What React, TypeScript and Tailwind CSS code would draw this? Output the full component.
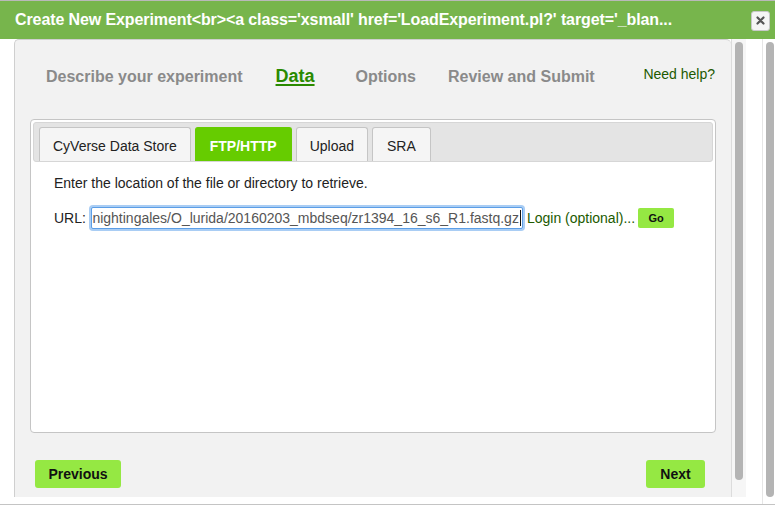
import React from "react";

export default function App() {
  const font = { fontFamily: '"Liberation Sans", Arial, sans-serif' };
  return (
    <div className="w-[775px] h-[506px] overflow-hidden bg-white flex flex-col" style={font}>
      {/* Header */}
      <div className="h-[39px] shrink-0 bg-[#77b54c] border-t border-[#b9b9b9] flex items-center pl-[15px] pr-[5px]">
        <div className="text-white font-bold text-[16px] leading-none whitespace-nowrap tracking-[-0.1px]">
          Create New Experiment&lt;br&gt;&lt;a class='xsmall' href='LoadExperiment.pl?' target='_blan...
        </div>
        <div className="ml-auto w-[19px] h-[20px] mt-[1px] bg-[#f5f5f5] border border-[#c8c8c8] rounded-[3px] flex items-center justify-center">
          <svg width="9" height="9" viewBox="0 0 9 9">
            <path d="M1.5 1.5 L7.5 7.5 M7.5 1.5 L1.5 7.5" stroke="#555" strokeWidth="2.2" strokeLinecap="round" />
          </svg>
        </div>
      </div>

      {/* Body */}
      <div className="flex flex-1 min-h-0">
        <div className="w-[14px] shrink-0" />
        {/* Panel */}
        <div className="w-[717px] h-[458px] shrink-0 bg-[#f2f2f2] border-l border-t border-[#cfcfcf] rounded-tl-[5px] rounded-tr-[5px] flex flex-col">
          {/* Steps */}
          <div className="h-[79px] flex items-center pl-[31px] pr-[16px] pb-[6px] whitespace-nowrap">
            <span className="text-[16px] font-bold text-[#8a8a8a]">Describe your experiment</span>
            <span className="ml-[33px] text-[18px] font-bold text-[#2a8a00] underline underline-offset-[2px] decoration-[2px]">Data</span>
            <span className="ml-[41px] text-[16px] font-bold text-[#8a8a8a]">Options</span>
            <span className="ml-[32px] text-[16px] font-bold text-[#8a8a8a]">Review and Submit</span>
            <span className="ml-auto text-[14px] text-[#215a00] -mt-[4px]">Need help?</span>
          </div>

          {/* Tab box */}
          <div className="ml-[15px] w-[686px] h-[314px] bg-white border border-[#c5c5c5] rounded-[4px] p-[2px] flex flex-col">
            <div className="h-[40px] bg-[#e4e4e4] border border-[#d6d6d6] rounded-[3px] flex items-end pl-[5px] gap-[4px]">
              <div className="h-[34px] px-[13px] pt-[3px] bg-[#f5f5f5] border border-b-0 border-[#c5c5c5] rounded-t-[3px] flex items-center text-[14px] text-[#222]">
                CyVerse Data Store
              </div>
              <div className="h-[34px] px-[14px] pt-[3px] bg-[#66cc00] border border-b-0 border-[#66cc00] rounded-t-[3px] flex items-center text-[14px] font-bold text-white">
                FTP/HTTP
              </div>
              <div className="h-[34px] px-[13px] pt-[3px] bg-[#f5f5f5] border border-b-0 border-[#c5c5c5] rounded-t-[3px] flex items-center text-[14px] text-[#222]">
                Upload
              </div>
              <div className="h-[34px] px-[14px] pt-[3px] bg-[#f5f5f5] border border-b-0 border-[#c5c5c5] rounded-t-[3px] flex items-center text-[14px] text-[#222]">
                SRA
              </div>
            </div>
            <div className="pl-[21px] pt-[13px] text-[14px] text-[#222]">
              <div className="leading-[17px]">Enter the location of the file or directory to retrieve.</div>
              <div className="mt-[15px] flex items-center">
                <span>URL:</span>
                <div className="ml-[5px] w-[432px] h-[22px] border border-[#5c9ee6] rounded-[2px] shadow-[0_0_0_2px_#a9cdf4] bg-white flex items-center justify-end overflow-hidden whitespace-nowrap pr-[1px]">
                  <span className="text-[#555] text-[14px]">nightingales/O_lurida/20160203_mbdseq/zr1394_16_s6_R1.fastq.gz</span>
                  <span className="w-[1px] h-[16px] bg-[#111] ml-[1px] shrink-0" />
                </div>
                <span className="ml-[4px] text-[#215a00]">Login (optional)...</span>
                <div className="ml-[3px] w-[36px] h-[20px] bg-[#95e843] rounded-[2px] flex items-center justify-center text-[11px] font-bold text-[#111]">
                  Go
                </div>
              </div>
            </div>
          </div>

          {/* Nav buttons */}
          <div className="mt-[27px] pl-[20px] pr-[26px] flex">
            <div className="w-[86px] h-[28px] bg-[#95e843] rounded-[3px] flex items-center justify-center text-[14px] font-bold text-[#111]">
              Previous
            </div>
            <div className="ml-auto w-[59px] h-[28px] bg-[#95e843] rounded-[3px] flex items-center justify-center text-[14px] font-bold text-[#111]">
              Next
            </div>
          </div>
        </div>

        {/* Scrollbar 1 */}
        <div className="w-[15px] h-[458px] shrink-0 bg-[#f6f6f6] border-l border-[#dcdcdc] pt-[3px] pl-[3px]">
          <div className="w-[8px] h-[438px] bg-[#b4b4b4] rounded-full" />
        </div>
        <div className="w-[16px] shrink-0" />
        {/* Scrollbar 2 */}
        <div className="w-[13px] h-[465px] shrink-0 bg-white border-l border-[#e6e6e6] pt-[3px] pl-[3px]">
          <div className="w-[8px] h-[455px] bg-[#b4b4b4] rounded-full" />
        </div>
      </div>
      <div className="h-[1px] shrink-0 bg-[#c4c4c4] mb-[1px]" />
    </div>
  );
}
